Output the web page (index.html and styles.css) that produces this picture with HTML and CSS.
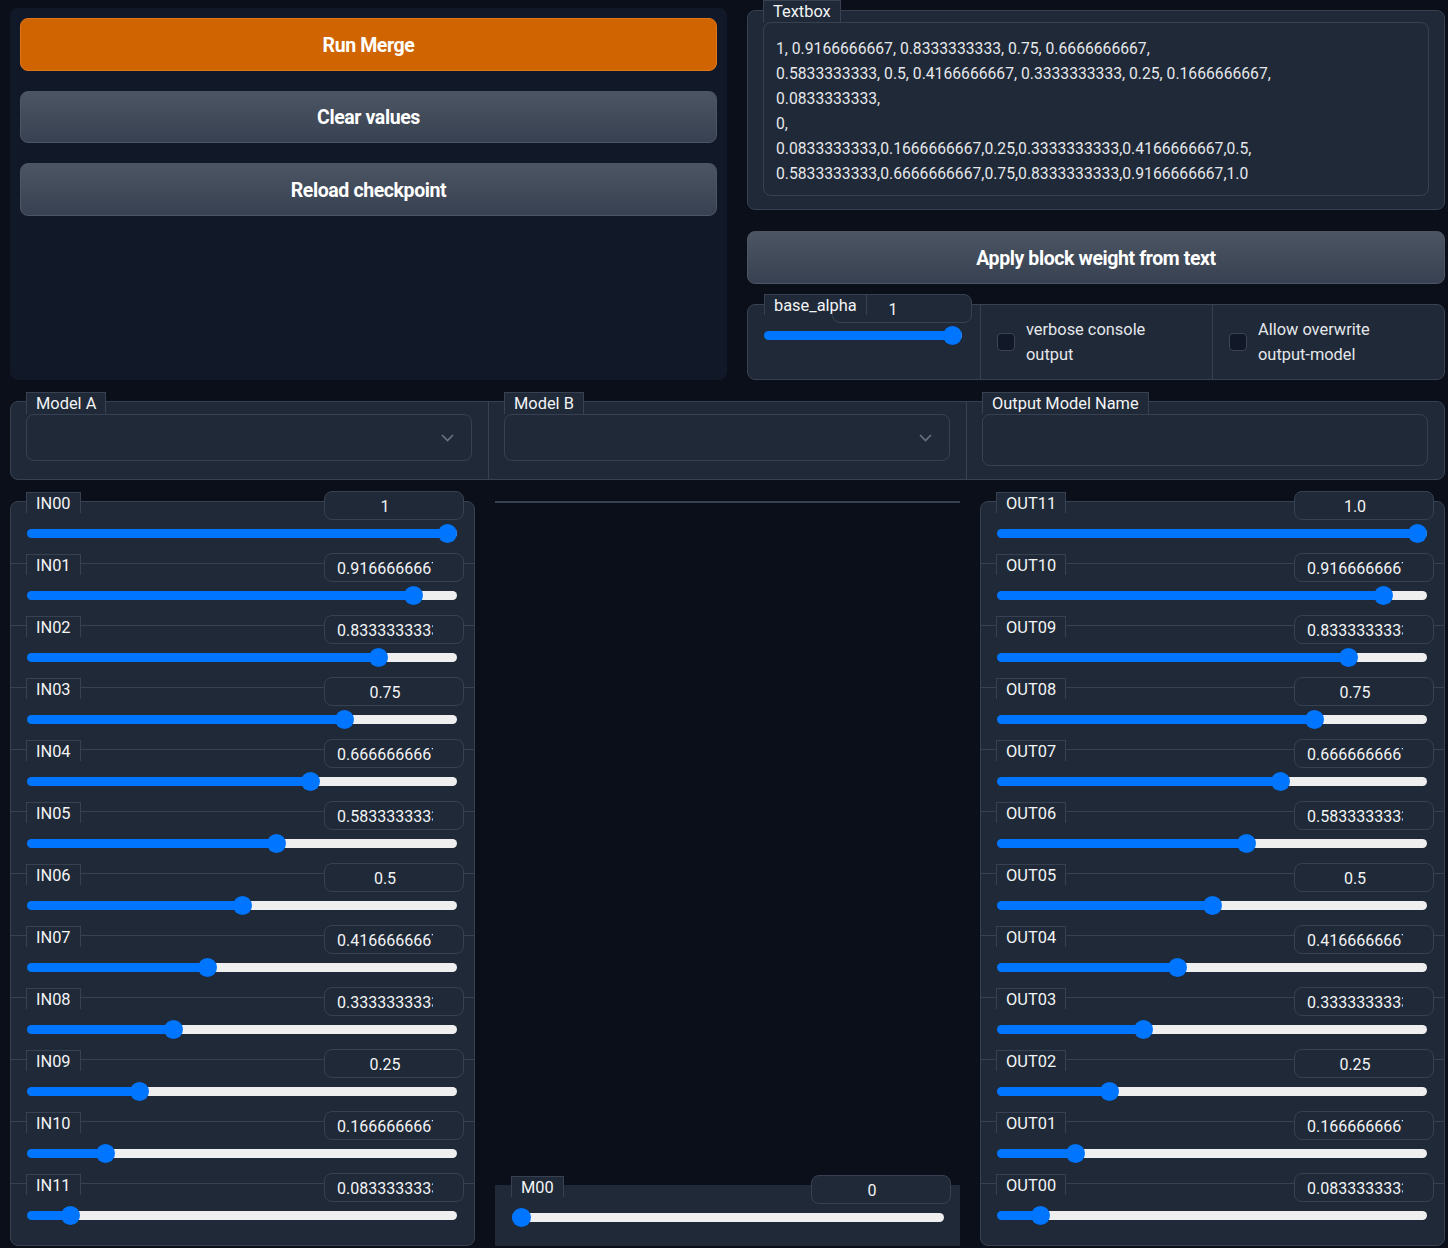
FILE: index.html
```html
<!DOCTYPE html>
<html lang="en">
<head>
<meta charset="utf-8">
<title>Block Merge</title>
<link rel="stylesheet" href="styles.css">
</head>
<body>
<div class="page">
  <div class="top">
    <div class="panel">
      <button class="btn btn-primary">Run Merge</button>
      <button class="btn">Clear values</button>
      <button class="btn">Reload checkpoint</button>
    </div>
    <div class="right">
      <div class="blk tbox">
        <span class="tab tab-big">Textbox</span>
        <textarea class="area" readonly>1, 0.9166666667, 0.8333333333, 0.75, 0.6666666667,
0.5833333333, 0.5, 0.4166666667, 0.3333333333, 0.25, 0.1666666667,
0.0833333333,
0,
0.0833333333,0.1666666667,0.25,0.3333333333,0.4166666667,0.5,
0.5833333333,0.6666666667,0.75,0.8333333333,0.9166666667,1.0</textarea>
      </div>
      <button class="btn apply">Apply block weight from text</button>
      <div class="blk arow">
        <div class="acell">
          <div class="shead shead-a"><span class="tab">base_alpha</span><input class="num" type="text" value="1" readonly></div>
          <input class="range range-a" type="range" min="0" max="1" step="0.01" value="1" style="--v:1">
        </div>
        <label class="ccell"><span class="cb"></span><span class="ctext">verbose console output</span></label>
        <label class="ccell"><span class="cb"></span><span class="ctext">Allow overwrite output-model</span></label>
      </div>
    </div>
  </div>

  <div class="blk models">
    <div class="mcell">
      <span class="tab tab-big">Model A</span>
      <div class="dd"><svg width="13" height="8" viewBox="0 0 13 8"><polyline points="1,1 6.5,6.5 12,1" fill="none" stroke="#6b7280" stroke-width="1.6"/></svg></div>
    </div>
    <div class="mcell">
      <span class="tab tab-big">Model B</span>
      <div class="dd"><svg width="13" height="8" viewBox="0 0 13 8"><polyline points="1,1 6.5,6.5 12,1" fill="none" stroke="#6b7280" stroke-width="1.6"/></svg></div>
    </div>
    <div class="mcell">
      <span class="tab tab-big">Output Model Name</span>
      <div class="tinput"></div>
    </div>
  </div>

  <div class="bottom">
    <div class="blk col">
      <div class="srow"><div class="shead"><span class="tab">IN00</span><input class="num" type="text" value="1" readonly></div><input class="range" type="range" min="0" max="1" step="0.0001" value="1" style="--v:1"></div>
      <div class="srow"><div class="shead"><span class="tab">IN01</span><input class="num" type="text" value="0.9166666667" readonly></div><input class="range" type="range" min="0" max="1" step="0.0001" value="0.9167" style="--v:0.9166666667"></div>
      <div class="srow"><div class="shead"><span class="tab">IN02</span><input class="num" type="text" value="0.8333333333" readonly></div><input class="range" type="range" min="0" max="1" step="0.0001" value="0.8333" style="--v:0.8333333333"></div>
      <div class="srow"><div class="shead"><span class="tab">IN03</span><input class="num" type="text" value="0.75" readonly></div><input class="range" type="range" min="0" max="1" step="0.0001" value="0.75" style="--v:0.75"></div>
      <div class="srow"><div class="shead"><span class="tab">IN04</span><input class="num" type="text" value="0.6666666667" readonly></div><input class="range" type="range" min="0" max="1" step="0.0001" value="0.6667" style="--v:0.6666666667"></div>
      <div class="srow"><div class="shead"><span class="tab">IN05</span><input class="num" type="text" value="0.5833333333" readonly></div><input class="range" type="range" min="0" max="1" step="0.0001" value="0.5833" style="--v:0.5833333333"></div>
      <div class="srow"><div class="shead"><span class="tab">IN06</span><input class="num" type="text" value="0.5" readonly></div><input class="range" type="range" min="0" max="1" step="0.0001" value="0.5" style="--v:0.5"></div>
      <div class="srow"><div class="shead"><span class="tab">IN07</span><input class="num" type="text" value="0.4166666667" readonly></div><input class="range" type="range" min="0" max="1" step="0.0001" value="0.4167" style="--v:0.4166666667"></div>
      <div class="srow"><div class="shead"><span class="tab">IN08</span><input class="num" type="text" value="0.3333333333" readonly></div><input class="range" type="range" min="0" max="1" step="0.0001" value="0.3333" style="--v:0.3333333333"></div>
      <div class="srow"><div class="shead"><span class="tab">IN09</span><input class="num" type="text" value="0.25" readonly></div><input class="range" type="range" min="0" max="1" step="0.0001" value="0.25" style="--v:0.25"></div>
      <div class="srow"><div class="shead"><span class="tab">IN10</span><input class="num" type="text" value="0.1666666667" readonly></div><input class="range" type="range" min="0" max="1" step="0.0001" value="0.1667" style="--v:0.1666666667"></div>
      <div class="srow"><div class="shead"><span class="tab">IN11</span><input class="num" type="text" value="0.0833333333" readonly></div><input class="range" type="range" min="0" max="1" step="0.0001" value="0.0833" style="--v:0.0833333333"></div>
    </div>

    <div class="mid">
      <div class="hr"></div>
      <div class="mblock">
        <div class="srow"><div class="shead"><span class="tab">M00</span><input class="num" type="text" value="0" readonly></div><input class="range" type="range" min="0" max="1" step="0.0001" value="0" style="--v:0"></div>
      </div>
    </div>

    <div class="blk col">
      <div class="srow"><div class="shead"><span class="tab">OUT11</span><input class="num" type="text" value="1.0" readonly></div><input class="range" type="range" min="0" max="1" step="0.0001" value="1" style="--v:1"></div>
      <div class="srow"><div class="shead"><span class="tab">OUT10</span><input class="num" type="text" value="0.9166666667" readonly></div><input class="range" type="range" min="0" max="1" step="0.0001" value="0.9167" style="--v:0.9166666667"></div>
      <div class="srow"><div class="shead"><span class="tab">OUT09</span><input class="num" type="text" value="0.8333333333" readonly></div><input class="range" type="range" min="0" max="1" step="0.0001" value="0.8333" style="--v:0.8333333333"></div>
      <div class="srow"><div class="shead"><span class="tab">OUT08</span><input class="num" type="text" value="0.75" readonly></div><input class="range" type="range" min="0" max="1" step="0.0001" value="0.75" style="--v:0.75"></div>
      <div class="srow"><div class="shead"><span class="tab">OUT07</span><input class="num" type="text" value="0.6666666667" readonly></div><input class="range" type="range" min="0" max="1" step="0.0001" value="0.6667" style="--v:0.6666666667"></div>
      <div class="srow"><div class="shead"><span class="tab">OUT06</span><input class="num" type="text" value="0.5833333333" readonly></div><input class="range" type="range" min="0" max="1" step="0.0001" value="0.5833" style="--v:0.5833333333"></div>
      <div class="srow"><div class="shead"><span class="tab">OUT05</span><input class="num" type="text" value="0.5" readonly></div><input class="range" type="range" min="0" max="1" step="0.0001" value="0.5" style="--v:0.5"></div>
      <div class="srow"><div class="shead"><span class="tab">OUT04</span><input class="num" type="text" value="0.4166666667" readonly></div><input class="range" type="range" min="0" max="1" step="0.0001" value="0.4167" style="--v:0.4166666667"></div>
      <div class="srow"><div class="shead"><span class="tab">OUT03</span><input class="num" type="text" value="0.3333333333" readonly></div><input class="range" type="range" min="0" max="1" step="0.0001" value="0.3333" style="--v:0.3333333333"></div>
      <div class="srow"><div class="shead"><span class="tab">OUT02</span><input class="num" type="text" value="0.25" readonly></div><input class="range" type="range" min="0" max="1" step="0.0001" value="0.25" style="--v:0.25"></div>
      <div class="srow"><div class="shead"><span class="tab">OUT01</span><input class="num" type="text" value="0.1666666667" readonly></div><input class="range" type="range" min="0" max="1" step="0.0001" value="0.1667" style="--v:0.1666666667"></div>
      <div class="srow"><div class="shead"><span class="tab">OUT00</span><input class="num" type="text" value="0.0833333333" readonly></div><input class="range" type="range" min="0" max="1" step="0.0001" value="0.0833" style="--v:0.0833333333"></div>
    </div>
  </div>
</div>
</body>
</html>
```

FILE: styles.css
```css
* { box-sizing: border-box; margin: 0; }
html, body { background: #0b0f19; }
body {
  margin: 0;
  width: 1448px;
  height: 1248px;
  overflow: hidden;
  font-family: Roboto, "Noto Sans", sans-serif;
  font-size: 16.4px;
  color: #e5e7eb;
}
.page {
  display: flex;
  flex-direction: column;
  gap: 21px;
  padding: 0 3px 0 10px;
}

/* top area */
.top { display: flex; gap: 20px; height: 380px; }
.panel {
  width: 717px;
  flex-shrink: 0;
  margin-top: 8px;
  background: #111827;
  border-radius: 8px;
  padding: 10px;
  display: flex;
  flex-direction: column;
  gap: 20px;
}
.btn {
  height: 52.5px;
  display: flex;
  align-items: center;
  justify-content: center;
  border-radius: 8px;
  border: 1px solid #4b5563;
  background: linear-gradient(180deg, #4b5563, #374151);
  color: #fff;
  font-family: Roboto, sans-serif;
  font-weight: 700;
  font-size: 19.5px;
  letter-spacing: -0.4px;
  padding: 2px 0 0;
}
.btn-primary { background: #cf6400; border-color: #e0761a; }
.right { flex: 1 1 0; min-width: 0; display: flex; flex-direction: column; }
.apply { margin-top: 21px; flex-shrink: 0; }

.blk {
  background: #1f2937;
  border: 1px solid #374151;
  border-radius: 8px;
}
.tab {
  position: relative;
  z-index: 1;
  align-self: flex-start;
  flex-shrink: 0;
  height: 22px;
  padding: 1px 9px 0;
  border: 1px solid #374151;
  border-bottom: 0;
  background: #1f2937;
  line-height: 20px;
  white-space: nowrap;
  color: #f3f4f6;
}

.tbox {
  margin-top: 10px;
  height: 200px;
  display: flex;
  flex-direction: column;
  padding: 0 15px 13px;
}
.tbox .tab { margin-top: -11px; }
.area {
  display: block;
  width: 100%;
  height: 174px;
  resize: none;
  overflow: hidden;
  background: #1f2937;
  border: 1px solid #374151;
  border-radius: 8px;
  padding: 13px 12px 0;
  font-family: Roboto, sans-serif;
  font-size: 15.7px;
  line-height: 25px;
  color: #e5e7eb;
  outline: none;
}

/* alpha row */
.arow {
  margin-top: 20px;
  height: 77px;
  display: grid;
  grid-template-columns: repeat(3, minmax(0, 1fr));
}
.acell { min-width: 0; padding: 0 8px 0 16px; }
.shead-a { margin-top: -10px; }
.shead.shead-a .tab { margin-top: 0; }
.range.range-a { width: calc(100% - 10px); margin: 8.5px 10px 0 0; }
.ccell {
  min-width: 0;
  border-left: 1px solid #374151;
  display: flex;
  align-items: center;
  gap: 11px;
  padding: 0 16px;
}
.cb {
  width: 18px;
  height: 18px;
  flex-shrink: 0;
  border: 1px solid #3b4556;
  border-radius: 4px;
  background: #111827;
}
.ctext { max-width: 160px; line-height: 25px; color: #e5e7eb; }

/* model row */
.models { display: flex; height: 79px; }
.mcell {
  flex: 1 1 0;
  min-width: 0;
  display: flex;
  flex-direction: column;
  padding: 0 16px 13px 15px;
}
.mcell + .mcell { border-left: 1px solid #374151; }
.mcell .tab { margin-top: -10px; }
.dd {
  height: 47px;
  border: 1px solid #374151;
  border-radius: 8px;
  background: #1f2937;
  display: flex;
  align-items: center;
  justify-content: flex-end;
  padding-right: 17px;
}
.dd svg { display: block; }
.tinput {
  height: 52px;
  border: 1px solid #374151;
  border-radius: 8px;
  background: #1f2937;
}

/* sliders */
.bottom {
  display: grid;
  grid-template-columns: repeat(3, minmax(0, 1fr));
  gap: 20px;
  height: 745px;
}
.col { min-width: 0; display: flex; flex-direction: column; }
.srow {
  height: 62px;
  flex-shrink: 0;
  border-top: 1px solid #374151;
  padding: 0 10px 0 15px;
}
.srow:first-child { border-top: 0; height: 61px; }
.shead {
  display: flex;
  justify-content: space-between;
  align-items: flex-start;
  margin-top: -11px;
  height: 29px;
}
.shead .tab { margin-top: 1px; margin-right: -60px; height: 21px; padding-top: 1px; line-height: 19px; }
.num {
  width: 140px;
  height: 29px;
  flex-shrink: 0;
  border: 1px solid #374151;
  border-radius: 8px;
  background: #1f2937;
  color: #f3f4f6;
  font-family: Roboto, sans-serif;
  font-size: 16px;
  text-align: center;
  padding: 2px 30px 0 12px;
  outline: none;
}
.range {
  display: block;
  -webkit-appearance: none;
  appearance: none;
  width: calc(100% - 8px);
  margin: 8.5px 7px 0 1px;
  height: 9px;
  border-radius: 5px;
  background: linear-gradient(to right, #0075ff calc(9.5px + var(--v) * (100% - 19px)), #efefef 0);
  outline: none;
}
.range::-webkit-slider-thumb {
  -webkit-appearance: none;
  appearance: none;
  width: 19px;
  height: 19px;
  border-radius: 50%;
  background: #0075ff;
  border: 0;
}

.mid {
  min-width: 0;
  display: flex;
  flex-direction: column;
  justify-content: space-between;
}
.hr { height: 2px; background: #374151; }
.mblock {
  height: 61px;
  background: #1f2937;
  border: 1px solid #1f2937;
}
.mblock .srow { height: auto; padding-right: 8px; }
```
